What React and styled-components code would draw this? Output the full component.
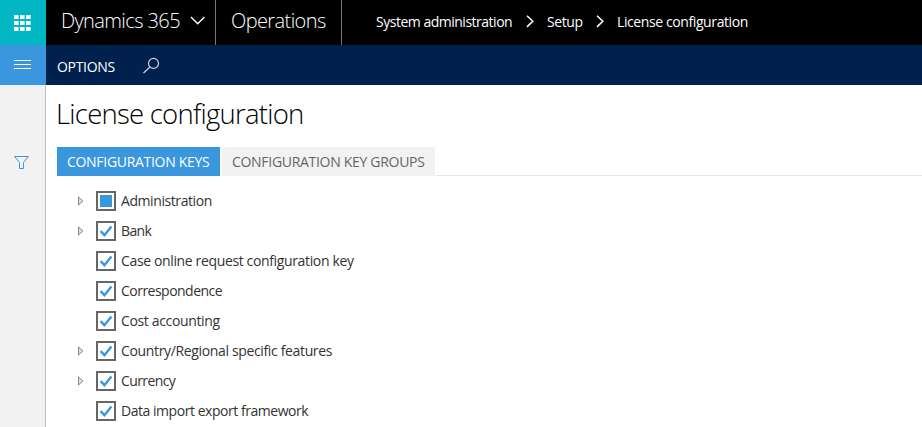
import React from "react";
import styled, { createGlobalStyle } from "styled-components";

const Global = createGlobalStyle`
  * { box-sizing: border-box; }
  body {
    margin: 0;
    background: #fff;
    font-family: "Open Sans", "Noto Sans", sans-serif;
    overflow: hidden;
  }
  svg { display: block; flex: none; }
`;

const Page = styled.div`
  display: grid;
  grid-template-columns: 46px 1fr;
  grid-template-rows: 45px 40px 1fr;
  height: 427px;
  overflow: hidden;
`;

const IconButton = styled.button`
  border: 0;
  padding: 0 0 0 14px;
  background: ${(p) => p.$color};
`;

const TopBar = styled.header`
  display: flex;
  background: #000;
  color: #fff;
`;

const Product = styled.div`
  display: flex;
  width: ${(p) => p.$width}px;
  padding-left: ${(p) => p.$inset}px;
  border-right: 1px solid #777;
  font-size: 20px;
  font-weight: 350;
  line-height: 42px;
  letter-spacing: ${(p) => p.$tracking}px;
  white-space: nowrap;
`;

const ProductName = styled.span`
  width: 129px;
`;

const Breadcrumb = styled.nav`
  display: flex;
  padding-left: 34px;
  font-size: 14px;
  line-height: 44px;
  white-space: nowrap;
`;

const Crumb = styled.span`
  width: ${(p) => p.$width}px;
  letter-spacing: ${(p) => p.$tracking}px;
`;

const CrumbArrow = styled.svg`
  margin: 15px 13px 0 0;
`;

const ActionBar = styled.div`
  display: flex;
  padding-left: 11px;
  background: #00204d;
  color: #fff;
  font-size: 14px;
  line-height: 44px;
`;

const Action = styled.span`
  width: 86px;
  letter-spacing: -0.3px;
`;

const SideRail = styled.aside`
  padding: 71px 0 0 14px;
  background: #f2f2f2;
  border-right: 1px solid #bebebe;
`;

const Content = styled.main`
  padding-left: 11px;
  min-width: 0;
`;

const Title = styled.h1`
  height: 62px;
  margin: 0;
  color: #000;
  font-size: 27.5px;
  font-weight: 300;
  line-height: 57px;
  letter-spacing: -0.75px;
  text-indent: -1px;
`;

const Tabs = styled.div`
  display: flex;
  gap: 2px;
  height: 29px;
`;

const Tab = styled.div`
  width: ${(p) => p.$width}px;
  padding-left: 10px;
  background: ${(p) => (p.$active ? "#3a96dd" : "#f2f2f2")};
  color: ${(p) => (p.$active ? "#fff" : "#666")};
  font-size: 14px;
  line-height: 30px;
  letter-spacing: ${(p) => p.$tracking}px;
  white-space: nowrap;
`;

const TabRule = styled.div`
  flex: 1;
  margin-left: -1px;
  border-bottom: 1px solid #e6e6e6;
`;

const Tree = styled.div`
  padding-top: 10px;
`;

const Row = styled.div`
  display: grid;
  grid-template-columns: 39px 25px 1fr;
  align-items: center;
  height: 30px;
`;

const Expander = styled.svg`
  margin-left: 21px;
`;

const Box = styled.span`
  display: grid;
  place-items: center;
  width: 20px;
  height: 20px;
  border: 2px solid #666;
  background: #fff;
`;

const Partial = styled.span`
  width: 12px;
  height: 12px;
  background: #3a96dd;
`;

const RowLabel = styled.span`
  color: #333;
  font-size: 14px;
  line-height: 30px;
  letter-spacing: ${(p) => p.$tracking}px;
  white-space: nowrap;
`;

const rows = [
  { label: "Administration", expand: true, partial: true, tracking: -0.42 },
  { label: "Bank", expand: true, tracking: -0.6 },
  { label: "Case online request configuration key", tracking: -0.36 },
  { label: "Correspondence", tracking: -0.52 },
  { label: "Cost accounting", tracking: -0.35 },
  { label: "Country/Regional specific features", expand: true, tracking: -0.35 },
  { label: "Currency", expand: true, tracking: -0.6 },
  { label: "Data import export framework", tracking: -0.46 },
];

const Waffle = () => (
  <svg width="17" height="16" viewBox="0 0 17 16" fill="#fff">
    {[0, 6, 12].map((y) =>
      [0, 6, 12].map((x) => (
        <rect key={`${x}-${y}`} x={x} y={y} width="4.6" height="4" />
      ))
    )}
  </svg>
);

const Arrow = () => (
  <CrumbArrow width="8" height="13" viewBox="0 0 8 13" fill="none" stroke="#fff" strokeWidth="1.5">
    <path d="M1 .7l5.8 5.6L1 11.9" />
  </CrumbArrow>
);

export default function App() {
  return (
    <>
      <Global />
      <Page>
        <IconButton $color="#00b7c3" aria-label="Apps">
          <Waffle />
        </IconButton>
        <TopBar>
          <Product $width={170} $inset={15} $tracking={-0.6}>
            <ProductName>Dynamics 365</ProductName>
            <svg width="16" height="30" viewBox="0 0 16 30" fill="none" stroke="#fff" strokeWidth="1.4">
              <path d="M1 17l6.7 6.7L14.4 17" />
            </svg>
          </Product>
          <Product $width={126} $inset={15} $tracking={-0.6}>Operations</Product>
          <Breadcrumb>
            <Crumb $width={150} $tracking={-0.49}>System administration</Crumb>
            <Arrow />
            <Crumb $width={49} $tracking={-0.4}>Setup</Crumb>
            <Arrow />
            <Crumb $width={140} $tracking={-0.4}>License configuration</Crumb>
          </Breadcrumb>
        </TopBar>
        <IconButton $color="#3a96dd" aria-label="Navigation">
          <svg width="17" height="10" viewBox="0 0 17 10" fill="#fff">
            <path d="M0 0h17v1H0zM0 4h17v1H0zM0 8h17v1H0z" />
          </svg>
        </IconButton>
        <ActionBar>
          <Action>OPTIONS</Action>
          <svg width="17" height="29" viewBox="0 0 17 29" fill="none" stroke="#c8d4e4" strokeWidth="1.2">
            <circle cx="10.5" cy="18.4" r="5" />
            <path d="M7 22L.5 28" />
          </svg>
        </ActionBar>
        <SideRail>
          <svg width="16" height="14" viewBox="0 0 16 14" fill="none" stroke="#3a96dd" strokeWidth="1">
            <path d="M.6.5h13.8L9.5 6.5v6h-4v-6z" />
          </svg>
        </SideRail>
        <Content>
          <Title>License configuration</Title>
          <Tabs>
            <Tab $active $width={163} $tracking={-0.3}>CONFIGURATION KEYS</Tab>
            <Tab $width={213} $tracking={-0.3}>CONFIGURATION KEY GROUPS</Tab>
            <TabRule />
          </Tabs>
          <Tree>
            {rows.map((r) => (
              <Row key={r.label}>
                <span>
                  {r.expand && (
                    <Expander width="6" height="10" viewBox="0 0 6 10" fill="#e4e4e4" stroke="#858585">
                      <path d="M.5 1v8L4.9 5z" />
                    </Expander>
                  )}
                </span>
                <Box>
                  {r.partial ? (
                    <Partial />
                  ) : (
                    <svg width="14" height="14" viewBox="0 0 14 14" fill="none" stroke="#3a96dd" strokeWidth="2.4">
                      <path d="M1.6 7.2l3.8 4L12.4 2.6" />
                    </svg>
                  )}
                </Box>
                <RowLabel $tracking={r.tracking}>{r.label}</RowLabel>
              </Row>
            ))}
          </Tree>
        </Content>
      </Page>
    </>
  );
}
